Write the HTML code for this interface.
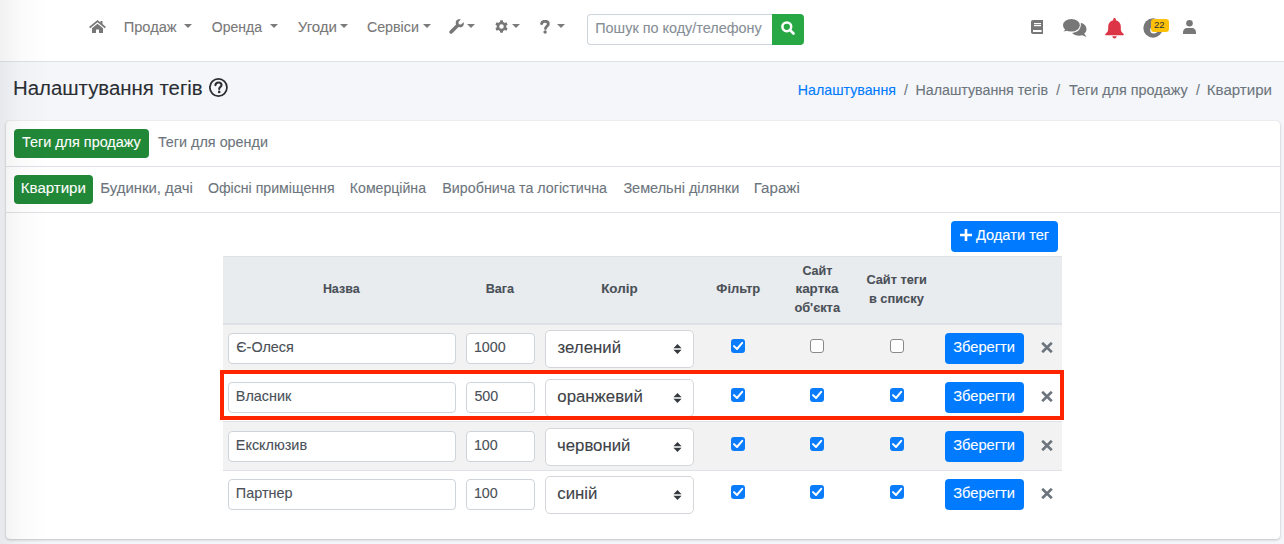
<!DOCTYPE html>
<html><head><meta charset="utf-8"><style>
*{box-sizing:border-box;margin:0;padding:0}
html,body{width:1284px;height:544px;overflow:hidden}
body{font-family:"Liberation Sans",sans-serif;background:#f4f6f9;color:#212529;position:relative;font-size:14px}
.abs{position:absolute}
.t{position:absolute;white-space:nowrap;line-height:1.117;-webkit-text-stroke:0.1px currentColor}
.caret{position:absolute;width:0;height:0;border-left:4.4px solid transparent;border-right:4.4px solid transparent;border-top:4.8px solid #7b7b7b}
.hr{position:absolute;left:6px;width:1274px;height:1px;background:#dee2e6}
.pill{position:absolute;height:29px;background:#218838;border-radius:4px}
.row{position:absolute;left:223px;width:839px}
.inp{position:absolute;height:30px;background:#fff;border:1px solid #ced4da;border-radius:4px}
.sel{position:absolute;height:37px;background:#fff;border:1px solid #d3d6da;border-radius:5px}
.cb{position:absolute;width:14px;height:14px;border-radius:3px}
.cb.on{background:#0b7cfc}
.cb.off{background:#fff;border:1px solid #8a8a8a}
.save{position:absolute;width:79px;height:31px;background:#007bff;border-radius:4px}
</style></head><body>
<div class="abs" style="left:0;top:0;width:1284px;height:62px;background:#fff;border-bottom:1px solid #dee2e6"></div>
<svg class="abs" style="left:89px;top:20px" width="17" height="13" viewBox="0 0 17 13"><path d="M8.5 0 L0 7 L1.2 8.3 L8.5 2.3 L15.8 8.3 L17 7 L13.5 4.1 V1 H11.5 V2.5 Z M3 8.2 V13 H7 V9.5 H10 V13 H14 V8.2 L8.5 3.7 Z" fill="#777"/></svg>
<div class="t" style="left:123.73px;top:19px;font-size:14.63px;line-height:16px;color:#787878;">Продаж</div>
<div class="caret" style="left:184.4px;top:23.5px"></div>
<div class="t" style="left:211.77px;top:19px;font-size:14.03px;line-height:16px;color:#787878;">Оренда</div>
<div class="caret" style="left:269.6px;top:23.5px"></div>
<div class="t" style="left:297.75px;top:18px;font-size:15.06px;line-height:17px;color:#787878;">Угоди</div>
<div class="caret" style="left:339.6px;top:23.5px"></div>
<div class="t" style="left:366.89px;top:19px;font-size:14.28px;line-height:16px;color:#787878;">Сервіси</div>
<div class="caret" style="left:422.6px;top:23.5px"></div>
<svg class="abs" style="left:449px;top:19px" width="15" height="15" viewBox="0 0 15 15"><path d="M14.5 3.2 L12 5.6 L9.8 5.2 L9.4 3 L11.8 0.5 C10 -0.2 8 0.3 7.2 1.8 C6.5 3 6.6 4.4 7.1 5.4 L0.8 11.7 C0.1 12.4 0.1 13.5 0.8 14.2 C1.5 14.9 2.6 14.9 3.3 14.2 L9.6 7.9 C10.6 8.4 12 8.5 13.2 7.8 C14.7 7 15.2 5 14.5 3.2Z" fill="#777"/></svg>
<div class="caret" style="left:466.6px;top:23.5px"></div>
<svg class="abs" style="left:494px;top:19px" width="15" height="15" viewBox="0 0 16 16"><path fill="#777" d="M9.3 0.3 L9.7 2.3 C10.3 2.5 10.8 2.8 11.3 3.2 L13.2 2.5 L14.5 4.8 L13 6.1 C13.1 6.7 13.1 7.3 13 7.9 L14.5 9.2 L13.2 11.5 L11.3 10.8 C10.8 11.2 10.3 11.5 9.7 11.7 L9.3 13.7 H6.7 L6.3 11.7 C5.7 11.5 5.2 11.2 4.7 10.8 L2.8 11.5 L1.5 9.2 L3 7.9 C2.9 7.3 2.9 6.7 3 6.1 L1.5 4.8 L2.8 2.5 L4.7 3.2 C5.2 2.8 5.7 2.5 6.3 2.3 L6.7 0.3 Z M8 4.6 A2.4 2.4 0 1 0 8 9.4 A2.4 2.4 0 1 0 8 4.6Z" transform="translate(0,1)"/></svg>
<div class="caret" style="left:511.6px;top:23.5px"></div>
<svg class="abs" style="left:539.5px;top:20px" width="10" height="14" viewBox="0 0 10 14"><path d="M1.6 3.6 C2 1.9 3.3 1.3 5 1.3 C7 1.3 8.3 2.4 8.3 4 C8.3 6.2 5.5 6.3 5.5 8.6" fill="none" stroke="#777" stroke-width="2.9" stroke-linecap="round"/><circle cx="5.1" cy="12" r="1.7" fill="#777"/></svg>
<div class="caret" style="left:556.5px;top:23.5px"></div>
<div class="abs" style="left:587px;top:14px;width:186px;height:31px;border:1px solid #ced4da;border-right:0;border-radius:4px 0 0 4px;background:#fff"></div>
<div class="t" style="left:595.25px;top:20px;font-size:14.41px;line-height:16px;color:#868e96;">Пошук по коду/телефону</div>
<div class="abs" style="left:772px;top:14px;width:32px;height:31px;background:#28a745;border-radius:0 4px 4px 0"><svg style="position:absolute;left:9px;top:6.8px" width="14" height="14" viewBox="0 0 14 14"><circle cx="5.8" cy="5.8" r="4.4" fill="none" stroke="#fff" stroke-width="2.5"/><path d="M8.8 8.8 L12.5 12.5" stroke="#fff" stroke-width="2.6" stroke-linecap="round"/></svg></div>
<svg class="abs" style="left:1031px;top:20px" width="12" height="14" viewBox="0 0 12 14"><path d="M2 0 H12 V14 H2 C0.9 14 0 13.1 0 12 V2 C0 0.9 0.9 0 2 0Z" fill="#777"/><rect x="3" y="3" width="7" height="1.2" fill="#fff"/><rect x="3" y="5" width="7" height="1.2" fill="#fff"/><rect x="2" y="10" width="8.6" height="2" fill="#fff"/></svg>
<svg class="abs" style="left:1062.8px;top:19px" width="25" height="19" viewBox="0 0 25 19"><ellipse cx="8.4" cy="6.3" rx="8.4" ry="6.3" fill="#777"/><path d="M0.5 12.5 L3.5 9 L6 11.2 Z" fill="#777"/><path d="M17.8 3.8 C21.5 5 23.5 7.3 23.5 10.2 C23.5 12 22.6 13.5 21.2 14.6 L23.5 18 L19.2 16.3 C18.2 16.6 17.3 16.7 16.2 16.7 C13.2 16.7 10.7 15.6 9.2 13.9 C14.5 13.6 18.5 10.5 17.8 3.8Z" fill="#777"/></svg>
<svg class="abs" style="left:1105px;top:18px" width="19" height="21" viewBox="0 0 19 21"><path d="M9.5 0 C10.3 0 10.8 0.6 10.8 1.3 V2.2 C13.8 2.8 15.8 5.3 15.8 8.5 V11 C15.8 13 16.8 14.5 18.6 16 C19 16.4 18.9 17.2 18.1 17.2 H0.9 C0.1 17.2 0 16.4 0.4 16 C2.2 14.5 3.2 13 3.2 11 V8.5 C3.2 5.3 5.2 2.8 8.2 2.2 V1.3 C8.2 0.6 8.7 0 9.5 0Z M7.3 18.3 H11.7 C11.7 19.5 10.7 20.5 9.5 20.5 C8.3 20.5 7.3 19.5 7.3 18.3Z" fill="#dc3545"/></svg>
<svg class="abs" style="left:1143px;top:18px" width="20" height="20" viewBox="0 0 20 20"><circle cx="10" cy="10" r="9.7" fill="#777"/><circle cx="10.8" cy="12" r="3.6" fill="#fff"/></svg>
<div class="abs" style="left:1151px;top:19px;width:18px;height:13px;background:#ffc107;border-radius:3px"></div>
<div class="t" style="left:1154.02px;top:19px;font-size:9.60px;line-height:11px;color:#1f2d3d;-webkit-text-stroke:0">22</div>
<svg class="abs" style="left:1183px;top:20px" width="13" height="14" viewBox="0 0 13 14"><circle cx="6.5" cy="3.3" r="3.3" fill="#777"/><path d="M0 12.5 C0 9.6 1.8 8 4 8 H9 C11.2 8 13 9.6 13 12.5 V14 H0Z" fill="#777"/></svg>
<div class="t" style="left:12.97px;top:77px;font-size:20.39px;line-height:22px;color:#2a2e33;">Налаштування тегів</div>
<svg class="abs" style="left:209px;top:77.6px" width="19" height="19" viewBox="0 0 19 19"><circle cx="9.4" cy="9.5" r="8.55" fill="none" stroke="#2a2e33" stroke-width="1.75"/><path d="M6.4 7.2 C6.6 5.4 7.9 4.5 9.5 4.5 C11.2 4.5 12.5 5.5 12.5 7 C12.5 8.9 10.2 9.1 10.2 10.9" fill="none" stroke="#2a2e33" stroke-width="2.1" stroke-linecap="round"/><circle cx="10.2" cy="13.9" r="1.3" fill="#2a2e33"/></svg>
<div class="t" style="left:797.86px;top:82px;font-size:14.19px;line-height:16px;color:#007bff;">Налаштування</div>
<div class="t" style="left:904.00px;top:82px;font-size:14.00px;line-height:16px;color:#6c757d;">/</div>
<div class="t" style="left:915.56px;top:82px;font-size:14.22px;line-height:16px;color:#6c757d;">Налаштування тегів</div>
<div class="t" style="left:1056.30px;top:82px;font-size:14.00px;line-height:16px;color:#6c757d;">/</div>
<div class="t" style="left:1068.91px;top:82px;font-size:14.40px;line-height:16px;color:#6c757d;">Теги для продажу</div>
<div class="t" style="left:1196.00px;top:82px;font-size:14.00px;line-height:16px;color:#6c757d;">/</div>
<div class="t" style="left:1206.79px;top:81px;font-size:15.09px;line-height:17px;color:#6c757d;">Квартири</div>
<div class="abs" style="left:6px;top:121px;width:1274px;height:418px;background:#fff;border-radius:4px;box-shadow:0 0 1px rgba(0,0,0,.125),0 1px 3px rgba(0,0,0,.2)"></div>
<div class="hr" style="top:166px"></div>
<div class="hr" style="top:212px"></div>
<div class="pill" style="left:14px;top:129px;width:135px"></div>
<div class="t" style="left:21.91px;top:134px;font-size:14.41px;line-height:16px;color:#fff;">Теги для продажу</div>
<div class="t" style="left:157.91px;top:134px;font-size:14.36px;line-height:16px;color:#6c757d;">Теги для оренди</div>
<div class="pill" style="left:14px;top:175px;width:79px"></div>
<div class="t" style="left:20.79px;top:179px;font-size:15.07px;line-height:17px;color:#fff;">Квартири</div>
<div class="t" style="left:100.31px;top:179px;font-size:14.92px;line-height:17px;color:#6c757d;">Будинки, дачі</div>
<div class="t" style="left:207.96px;top:180px;font-size:14.15px;line-height:16px;color:#6c757d;">Офісні приміщення</div>
<div class="t" style="left:349.87px;top:180px;font-size:14.10px;line-height:16px;color:#6c757d;">Комерційна</div>
<div class="t" style="left:442.36px;top:180px;font-size:14.28px;line-height:16px;color:#6c757d;">Виробнича та логістична</div>
<div class="t" style="left:623.39px;top:180px;font-size:14.47px;line-height:16px;color:#6c757d;">Земельні ділянки</div>
<div class="t" style="left:753.79px;top:179px;font-size:15.10px;line-height:17px;color:#6c757d;">Гаражі</div>
<div class="abs" style="left:951px;top:221px;width:107px;height:31px;background:#007bff;border-radius:4px"></div>
<svg class="abs" style="left:959.5px;top:228.5px" width="12" height="12" viewBox="0 0 12 12"><path d="M6 0 V12 M0 6 H12" stroke="#fff" stroke-width="2.6"/></svg>
<div class="t" style="left:975.93px;top:227px;font-size:14.65px;line-height:16px;color:#fff;">Додати тег</div>
<div class="abs" style="left:223px;top:256px;width:839px;height:69px;background:#e9ecef;border-top:1px solid #dee2e6;border-bottom:2px solid #dee2e6"></div>
<div class="t" style="left:322.89px;top:282px;font-size:12.46px;line-height:14px;color:#495057;font-weight:bold;">Назва</div>
<div class="t" style="left:485.68px;top:282px;font-size:12.62px;line-height:14px;color:#495057;font-weight:bold;">Вага</div>
<div class="t" style="left:601.13px;top:281px;font-size:13.42px;line-height:15px;color:#495057;font-weight:bold;">Колір</div>
<div class="t" style="left:716.35px;top:281px;font-size:12.95px;line-height:15px;color:#495057;font-weight:bold;">Фільтр</div>
<div class="t" style="left:802.40px;top:264px;font-size:12.52px;line-height:14px;color:#495057;font-weight:bold;">Сайт</div>
<div class="t" style="left:795.46px;top:281px;font-size:13.41px;line-height:15px;color:#495057;font-weight:bold;">картка</div>
<div class="t" style="left:794.39px;top:300px;font-size:12.81px;line-height:15px;color:#495057;font-weight:bold;">об'єкта</div>
<div class="t" style="left:866.39px;top:272px;font-size:12.76px;line-height:15px;color:#495057;font-weight:bold;">Сайт теги</div>
<div class="t" style="left:868.90px;top:291px;font-size:12.84px;line-height:15px;color:#495057;font-weight:bold;">в списку</div>
<div class="row" style="top:325px;height:47px;background:#f2f2f2"></div>
<div class="row" style="top:372px;height:49px;background:#fff;border-top:1px solid #dee2e6"></div>
<div class="row" style="top:421px;height:49px;background:#f2f2f2;border-top:1px solid #dee2e6"></div>
<div class="row" style="top:470px;height:49px;background:#fff;border-top:1px solid #dee2e6"></div>
<div class="inp" style="left:228px;top:333px;width:228px;height:31px"></div>
<div class="t" style="left:236.28px;top:339px;font-size:14.40px;line-height:16px;color:#495057;">Є-Олеся</div>
<div class="inp" style="left:466px;top:333px;width:69px;height:31px"></div>
<div class="t" style="left:473.93px;top:339px;font-size:14.30px;line-height:16px;color:#495057;">1000</div>
<div class="sel" style="left:545px;top:330px;width:149px;height:38px"></div>
<div class="t" style="left:557.58px;top:338px;font-size:16.80px;line-height:19px;color:#3d4247;">зелений</div>
<svg class="abs" style="left:673px;top:344px" width="9" height="10" viewBox="0 0 9 10"><path d="M4.5 0 L8.6 4.2 H0.4Z M4.5 10 L8.6 5.8 H0.4Z" fill="#343a40"/></svg>
<div class="cb on" style="left:731px;top:339px"><svg width="14" height="14" viewBox="0 0 14 14" style="position:absolute;left:0;top:0"><path d="M3 7.1 L6 10 L11.2 3.8" fill="none" stroke="#fff" stroke-width="2" stroke-linecap="round" stroke-linejoin="round"/></svg></div>
<div class="cb off" style="left:810px;top:339px"></div>
<div class="cb off" style="left:890px;top:339px"></div>
<div class="save" style="left:945px;top:333.2px"></div>
<div class="t" style="left:953.19px;top:339px;font-size:14.67px;line-height:16px;color:#fff;">Зберегти</div>
<svg class="abs" style="left:1041px;top:342.2px" width="12" height="11" viewBox="0 0 12 11"><path d="M1.2 0.8 L10.8 10.2 M10.8 0.8 L1.2 10.2" stroke="#6c757d" stroke-width="2.7"/></svg>
<div class="inp" style="left:228px;top:382px;width:228px;height:31px"></div>
<div class="t" style="left:235.85px;top:388px;font-size:14.40px;line-height:16px;color:#495057;">Власник</div>
<div class="inp" style="left:466px;top:382px;width:69px;height:31px"></div>
<div class="t" style="left:474.43px;top:388px;font-size:14.30px;line-height:16px;color:#495057;">500</div>
<div class="sel" style="left:545px;top:379px;width:149px;height:38px"></div>
<div class="t" style="left:557.33px;top:387px;font-size:16.80px;line-height:19px;color:#3d4247;">оранжевий</div>
<svg class="abs" style="left:673px;top:393px" width="9" height="10" viewBox="0 0 9 10"><path d="M4.5 0 L8.6 4.2 H0.4Z M4.5 10 L8.6 5.8 H0.4Z" fill="#343a40"/></svg>
<div class="cb on" style="left:731px;top:388px"><svg width="14" height="14" viewBox="0 0 14 14" style="position:absolute;left:0;top:0"><path d="M3 7.1 L6 10 L11.2 3.8" fill="none" stroke="#fff" stroke-width="2" stroke-linecap="round" stroke-linejoin="round"/></svg></div>
<div class="cb on" style="left:810px;top:388px"><svg width="14" height="14" viewBox="0 0 14 14" style="position:absolute;left:0;top:0"><path d="M3 7.1 L6 10 L11.2 3.8" fill="none" stroke="#fff" stroke-width="2" stroke-linecap="round" stroke-linejoin="round"/></svg></div>
<div class="cb on" style="left:890px;top:388px"><svg width="14" height="14" viewBox="0 0 14 14" style="position:absolute;left:0;top:0"><path d="M3 7.1 L6 10 L11.2 3.8" fill="none" stroke="#fff" stroke-width="2" stroke-linecap="round" stroke-linejoin="round"/></svg></div>
<div class="save" style="left:945px;top:382.2px"></div>
<div class="t" style="left:953.19px;top:388px;font-size:14.67px;line-height:16px;color:#fff;">Зберегти</div>
<svg class="abs" style="left:1041px;top:391.2px" width="12" height="11" viewBox="0 0 12 11"><path d="M1.2 0.8 L10.8 10.2 M10.8 0.8 L1.2 10.2" stroke="#6c757d" stroke-width="2.7"/></svg>
<div class="inp" style="left:228px;top:431px;width:228px;height:31px"></div>
<div class="t" style="left:235.85px;top:437px;font-size:14.40px;line-height:16px;color:#495057;">Ексклюзив</div>
<div class="inp" style="left:466px;top:431px;width:69px;height:31px"></div>
<div class="t" style="left:473.93px;top:437px;font-size:14.30px;line-height:16px;color:#495057;">100</div>
<div class="sel" style="left:545px;top:428px;width:149px;height:38px"></div>
<div class="t" style="left:556.99px;top:436px;font-size:16.80px;line-height:19px;color:#3d4247;">червоний</div>
<svg class="abs" style="left:673px;top:442px" width="9" height="10" viewBox="0 0 9 10"><path d="M4.5 0 L8.6 4.2 H0.4Z M4.5 10 L8.6 5.8 H0.4Z" fill="#343a40"/></svg>
<div class="cb on" style="left:731px;top:437px"><svg width="14" height="14" viewBox="0 0 14 14" style="position:absolute;left:0;top:0"><path d="M3 7.1 L6 10 L11.2 3.8" fill="none" stroke="#fff" stroke-width="2" stroke-linecap="round" stroke-linejoin="round"/></svg></div>
<div class="cb on" style="left:810px;top:437px"><svg width="14" height="14" viewBox="0 0 14 14" style="position:absolute;left:0;top:0"><path d="M3 7.1 L6 10 L11.2 3.8" fill="none" stroke="#fff" stroke-width="2" stroke-linecap="round" stroke-linejoin="round"/></svg></div>
<div class="cb on" style="left:890px;top:437px"><svg width="14" height="14" viewBox="0 0 14 14" style="position:absolute;left:0;top:0"><path d="M3 7.1 L6 10 L11.2 3.8" fill="none" stroke="#fff" stroke-width="2" stroke-linecap="round" stroke-linejoin="round"/></svg></div>
<div class="save" style="left:945px;top:431.2px"></div>
<div class="t" style="left:953.19px;top:437px;font-size:14.67px;line-height:16px;color:#fff;">Зберегти</div>
<svg class="abs" style="left:1041px;top:440.2px" width="12" height="11" viewBox="0 0 12 11"><path d="M1.2 0.8 L10.8 10.2 M10.8 0.8 L1.2 10.2" stroke="#6c757d" stroke-width="2.7"/></svg>
<div class="inp" style="left:228px;top:479px;width:228px;height:31px"></div>
<div class="t" style="left:235.85px;top:485px;font-size:14.40px;line-height:16px;color:#495057;">Партнер</div>
<div class="inp" style="left:466px;top:479px;width:69px;height:31px"></div>
<div class="t" style="left:473.93px;top:485px;font-size:14.30px;line-height:16px;color:#495057;">100</div>
<div class="sel" style="left:545px;top:476px;width:149px;height:38px"></div>
<div class="t" style="left:557.33px;top:484px;font-size:16.80px;line-height:19px;color:#3d4247;">синій</div>
<svg class="abs" style="left:673px;top:490px" width="9" height="10" viewBox="0 0 9 10"><path d="M4.5 0 L8.6 4.2 H0.4Z M4.5 10 L8.6 5.8 H0.4Z" fill="#343a40"/></svg>
<div class="cb on" style="left:731px;top:485px"><svg width="14" height="14" viewBox="0 0 14 14" style="position:absolute;left:0;top:0"><path d="M3 7.1 L6 10 L11.2 3.8" fill="none" stroke="#fff" stroke-width="2" stroke-linecap="round" stroke-linejoin="round"/></svg></div>
<div class="cb on" style="left:810px;top:485px"><svg width="14" height="14" viewBox="0 0 14 14" style="position:absolute;left:0;top:0"><path d="M3 7.1 L6 10 L11.2 3.8" fill="none" stroke="#fff" stroke-width="2" stroke-linecap="round" stroke-linejoin="round"/></svg></div>
<div class="cb on" style="left:890px;top:485px"><svg width="14" height="14" viewBox="0 0 14 14" style="position:absolute;left:0;top:0"><path d="M3 7.1 L6 10 L11.2 3.8" fill="none" stroke="#fff" stroke-width="2" stroke-linecap="round" stroke-linejoin="round"/></svg></div>
<div class="save" style="left:945px;top:479.2px"></div>
<div class="t" style="left:953.19px;top:485px;font-size:14.67px;line-height:16px;color:#fff;">Зберегти</div>
<svg class="abs" style="left:1041px;top:488.2px" width="12" height="11" viewBox="0 0 12 11"><path d="M1.2 0.8 L10.8 10.2 M10.8 0.8 L1.2 10.2" stroke="#6c757d" stroke-width="2.7"/></svg>
<div class="abs" style="left:219.8px;top:369.6px;width:844.6px;height:50.9px;border:4.7px solid #ff2400"></div>
<div class="abs" style="left:0;top:0;width:50px;height:544px;background:linear-gradient(to right,rgba(0,0,0,.055),rgba(0,0,0,.018) 20px,rgba(0,0,0,0) 50px)"></div>
</body></html>
